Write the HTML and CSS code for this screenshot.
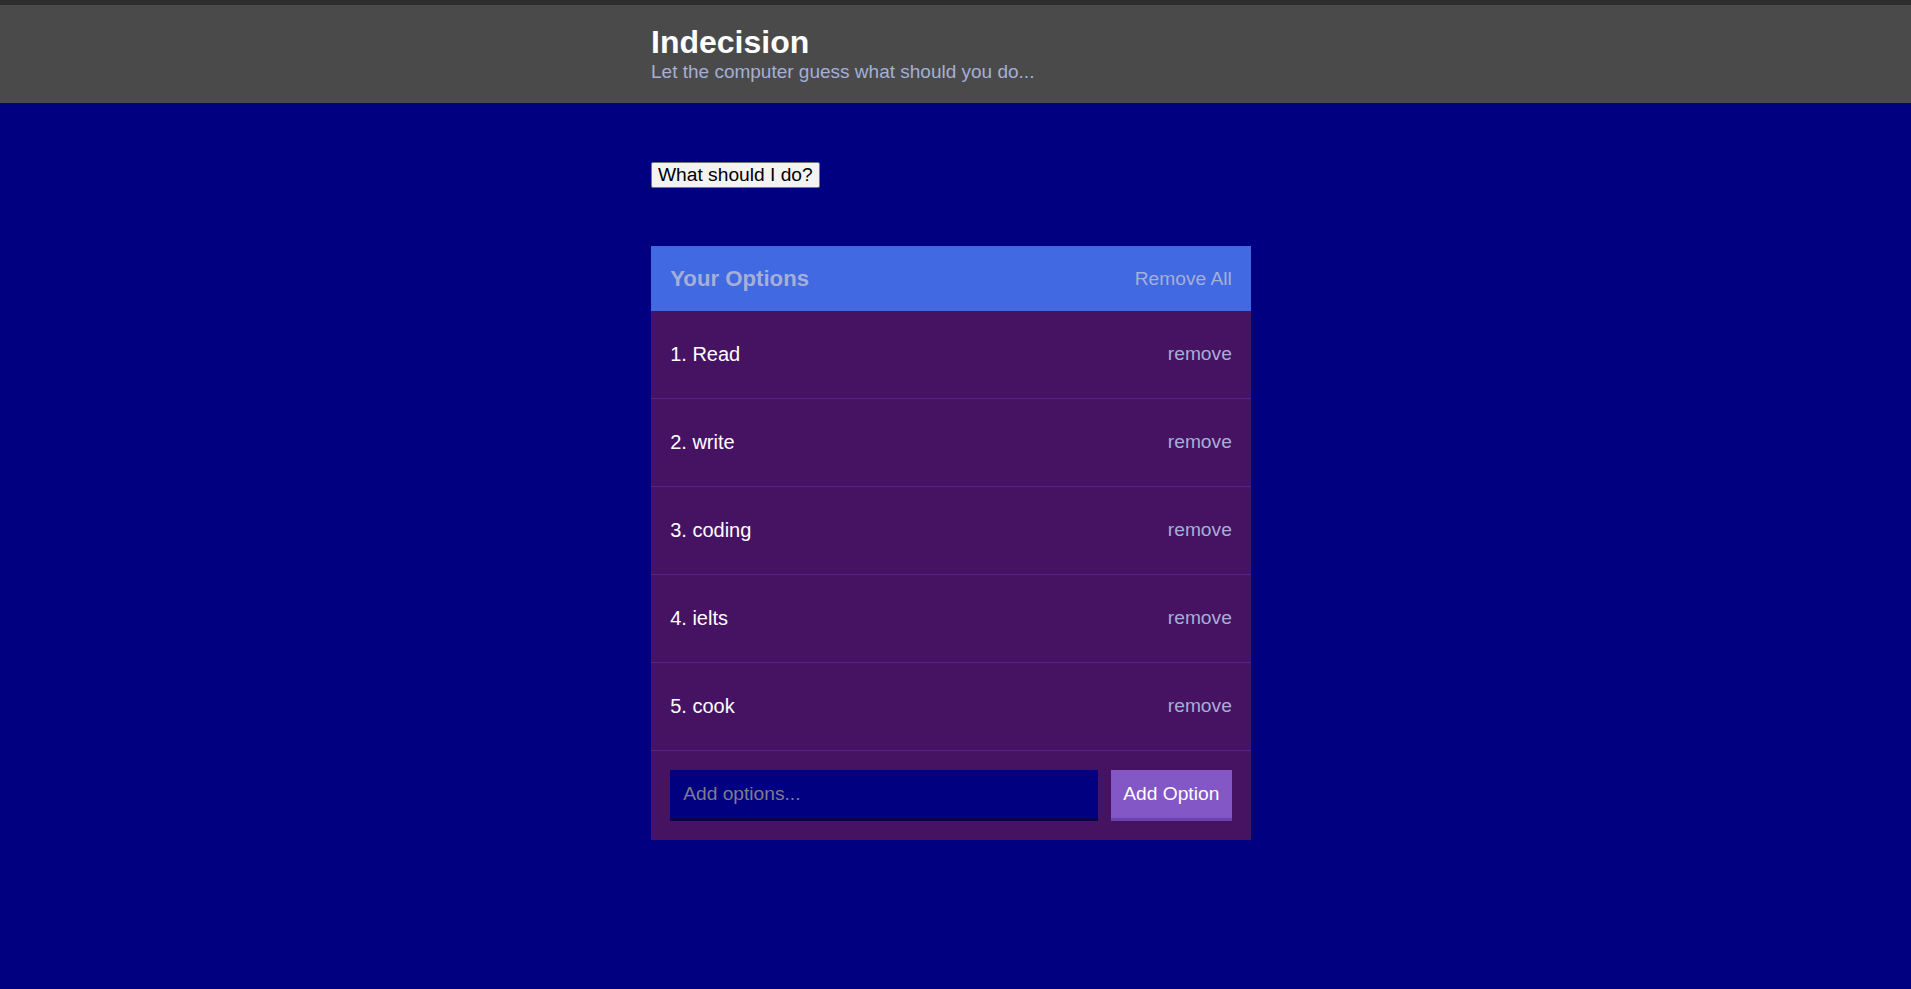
FILE: index.html
```
<!DOCTYPE html>
<html lang="en">
<head>
<meta charset="utf-8">
<title>Indecision</title>
<link rel="stylesheet" href="styles.css">
</head>
<body>
  <header class="header">
    <div class="container">
      <h1 class="header__title">Indecision</h1>
      <h2 class="header__subtitle">Let the computer guess what should you do...</h2>
    </div>
  </header>
  <main class="container">
    <button class="pick-button">What should I do?</button>
    <div class="widget">
      <div class="widget-header">
        <h3 class="widget-header__title">Your Options</h3>
        <button class="button--link">Remove All</button>
      </div>
      <div class="option">
        <p class="option__text">1. Read</p>
        <button class="button--link">remove</button>
      </div>
      <div class="option">
        <p class="option__text">2. write</p>
        <button class="button--link">remove</button>
      </div>
      <div class="option">
        <p class="option__text">3. coding</p>
        <button class="button--link">remove</button>
      </div>
      <div class="option">
        <p class="option__text">4. ielts</p>
        <button class="button--link">remove</button>
      </div>
      <div class="option">
        <p class="option__text">5. cook</p>
        <button class="button--link">remove</button>
      </div>
      <form class="add-option">
        <input class="add-option__input" type="text" name="option" placeholder="Add options...">
        <button class="button" type="button">Add Option</button>
      </form>
    </div>
  </main>
</body>
</html>
```

FILE: styles.css
```
* {
  box-sizing: border-box;
}

html, body {
  margin: 0;
  padding: 0;
}

body {
  background: #000080;
  font-family: "Liberation Sans", Arial, Helvetica, sans-serif;
  min-height: 100vh;
}

.container {
  box-sizing: content-box;
  max-width: 600px;
  margin: 0 auto;
  padding-right: 9px;
}

.header {
  background: #4a4a4a;
  border-top: 5px solid #2d2d2d;
  padding: 19.4px 0 19.8px;
  margin-bottom: 58.6px;
  color: #fff;
}

.header__title {
  margin: 0;
  font-size: 32px;
  font-weight: bold;
  line-height: normal;
}

.header__subtitle {
  margin: 0;
  font-size: 19px;
  font-weight: 500;
  line-height: normal;
  color: #a5afd7;
}

.pick-button {
  display: block;
  margin: 0 0 58.6px;
  font-family: "Liberation Sans", Arial, sans-serif;
  font-size: 19.2px;
  line-height: normal;
  color: #000;
  background: #f3f3f3;
  border: 1px solid #767676;
  border-radius: 2px;
  padding: 1px 6px;
}

.widget {
  background: #461362;
}

.widget-header {
  background: #4169e1;
  display: flex;
  justify-content: space-between;
  align-items: center;
  padding: 19.2px;
  color: #a5afd7;
}

.widget-header__title {
  margin: 0;
  font-size: 22.2px;
  font-weight: bold;
  line-height: normal;
}

.button--link {
  background: none;
  border: none;
  padding: 0;
  color: #a5afd7;
  font-family: "Liberation Sans", Arial, sans-serif;
  font-size: 19.2px;
  line-height: normal;
}

.option {
  display: flex;
  justify-content: space-between;
  align-items: center;
  padding: 32px 19.2px;
  border-bottom: 1px solid #5b2090;
}

.option__text {
  margin: 0;
  color: #fff;
  font-size: 20px;
  font-weight: 500;
  line-height: normal;
}

.add-option {
  display: flex;
  padding: 19.2px;
  margin: 0;
}

.add-option__input {
  flex-grow: 1;
  margin: 0 13px 0 0;
  padding: 13px;
  background: #000080;
  border: none;
  border-bottom: 3px solid #070545;
  color: #a5afd7;
  font-family: "Liberation Sans", Arial, sans-serif;
  font-size: 19.2px;
  line-height: normal;
  outline: none;
}

.add-option__input::placeholder {
  color: #7d7d8f;
}

.button {
  background: #8357c5;
  border: none;
  border-bottom: 3px solid #6a44ad;
  color: #fff;
  font-family: "Liberation Sans", Arial, sans-serif;
  font-size: 19.2px;
  line-height: normal;
  padding: 13px 12.5px;
}
```
